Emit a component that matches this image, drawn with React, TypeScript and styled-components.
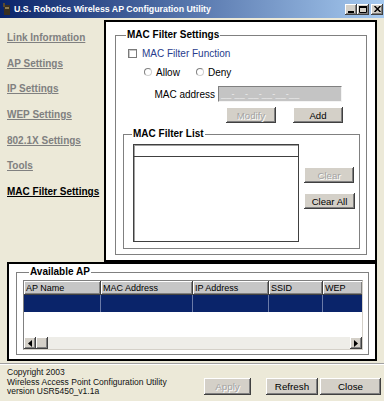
import React from 'react';
import styled, { createGlobalStyle } from 'styled-components';

const GlobalStyle = createGlobalStyle`
  html, body { margin: 0; padding: 0; }
  body { background: #ECE9D8; font-family: "Liberation Sans", Arial, sans-serif; }
  *, *::before, *::after { box-sizing: border-box; }
`;

const Window = styled.div`
  width: 384px;
  height: 401px;
  background: #ECE9D8;
  display: flex;
  flex-direction: column;
  overflow: hidden;
`;

const TitleBar = styled.div`
  height: 18px;
  flex: none;
  display: flex;
  align-items: center;
  background: linear-gradient(to right, #0A246A, #A6CAF0);
  padding: 0 1px 0 2px;
`;

const TitleText = styled.span`
  color: #fff;
  font-weight: bold;
  font-size: 8.8px;
  margin-left: 2px;
  flex: 1;
  white-space: nowrap;
`;

const CaptionButtons = styled.div`
  display: flex;
  align-items: center;
`;

const CaptionButton = styled.div<{ $gap?: number }>`
  width: 12px;
  height: 11px;
  margin-left: ${(p) => p.$gap ?? 0}px;
  background: #D4D0C8;
  box-shadow: inset -1px -1px #404040, inset 1px 1px #fff, inset -2px -2px #808080;
  display: flex;
  align-items: center;
  justify-content: center;
`;

const Upper = styled.div`
  display: flex;
  height: 244px;
  flex: none;
`;

const Nav = styled.nav`
  width: 104px;
  flex: none;
  display: flex;
  flex-direction: column;
  gap: 13.67px;
  padding: 14px 0 0 7px;
`;

const NavLink = styled.a<{ $active?: boolean }>`
  font-size: 10px;
  line-height: 12px;
  font-weight: bold;
  color: ${(p) => (p.$active ? '#000' : '#808080')};
  text-decoration: underline;
  white-space: nowrap;
  cursor: pointer;
`;

const MainPanel = styled.section`
  margin-top: 2px;
  width: 273px;
  height: 242px;
  flex: none;
  background: #fff;
  border: 2px solid #000;
  padding: 7px 8px 0 9px;
`;

const Group = styled.fieldset<{ $m?: string; $h: number }>`
  margin: ${(p) => p.$m ?? '0'};
  padding: 0;
  min-width: 0;
  height: ${(p) => p.$h}px;
  border: 1px solid #808080;
  display: block;
`;

const Legend = styled.legend<{ $inset: number }>`
  margin-left: ${(p) => p.$inset}px;
  padding: 0 1px;
  font-size: 10px;
  line-height: 12px;
  font-weight: bold;
  color: #000;
`;

const CheckRow = styled.label`
  display: flex;
  align-items: center;
  gap: 5px;
  height: 12px;
  margin: 6px 0 0 12px;
  font-size: 10px;
  color: #283C8C;
`;

const CheckBox = styled.span`
  width: 9px;
  height: 9px;
  background: #fff;
  border: 1px solid #7a7a7a;
  box-shadow: inset 1px 1px #c8c8c8;
`;

const RadioRow = styled.div`
  display: flex;
  align-items: center;
  height: 12px;
  margin: 7px 0 0 28px;
  gap: 16px;
`;

const RadioOption = styled.label`
  display: flex;
  align-items: center;
  gap: 4px;
  font-size: 10px;
  color: #000;
`;

const RadioDot = styled.span`
  width: 8px;
  height: 8px;
  border-radius: 50%;
  background: #fff;
  border: 1px solid #808080;
  border-right-color: #d0d0d0;
  border-bottom-color: #d0d0d0;
`;

const FieldRow = styled.div`
  display: flex;
  align-items: center;
  justify-content: flex-end;
  gap: 3px;
  height: 16px;
  margin-top: 8px;
  padding-right: 24px;
  font-size: 10px;
`;

const MacInput = styled.div`
  width: 124px;
  height: 16px;
  background: #C4C4C4;
  border: 1px solid #808080;
  border-right-color: #f4f4f4;
  border-bottom-color: #f4f4f4;
  font-size: 9px;
  line-height: 14px;
  padding-left: 2px;
  color: #ececec;
  letter-spacing: 0.2px;
`;

const ButtonRow = styled.div`
  display: flex;
  justify-content: flex-end;
  gap: 17px;
  margin-top: 5px;
  padding-right: 23px;
`;

const Button = styled.button<{ $w: number; $disabled?: boolean }>`
  width: ${(p) => p.$w}px;
  height: 16px;
  padding: 0;
  font-family: "Liberation Sans", Arial, sans-serif;
  font-size: 9.6px;
  background: #D4D0C8;
  border: none;
  box-shadow: inset -1px -1px #404040, inset 1px 1px #fff, inset -2px -2px #808080;
  color: ${(p) => (p.$disabled ? '#a3a3a3' : '#000')};
  text-shadow: ${(p) => (p.$disabled ? '1px 1px #fff' : 'none')};
`;

const ListArea = styled.div`
  display: flex;
  padding: 4px 0 0 9px;
`;

const ListBox = styled.div`
  width: 166px;
  height: 98px;
  background: #fff;
  border: 1px solid #404040;
  box-shadow: inset 1px 1px #a0a0a0;
`;

const ListHeader = styled.div`
  height: 12px;
  border-bottom: 1px solid #404040;
`;

const SideButtons = styled.div`
  display: flex;
  flex-direction: column;
  gap: 10px;
  margin-left: 5px;
  padding-top: 23px;
`;

const APPanel = styled.section`
  margin-left: 7px;
  width: 370px;
  height: 99px;
  flex: none;
  background: #fff;
  border: 2px solid #000;
  padding: 2px 6px 0 7px;
`;

const Table = styled.div`
  height: 70px;
  margin: 2px 5px 0 6px;
  border: 1px solid #808080;
  border-right-color: #d4d0c8;
  border-bottom-color: #d4d0c8;
  background: #fff;
  display: flex;
  flex-direction: column;
  overflow: hidden;
`;

const Row = styled.div`
  display: flex;
  flex: none;
`;

const HeadCell = styled.div<{ $w: number }>`
  width: ${(p) => p.$w}px;
  flex: none;
  height: 14px;
  background: #C6C6C6;
  box-shadow: inset -1px -1px #404040, inset 1px 1px #fff, inset -2px -2px #808080;
  font-size: 9px;
  line-height: 14px;
  padding-left: 2px;
  white-space: nowrap;
  overflow: hidden;
`;

const SelCell = styled.div<{ $w: number }>`
  width: ${(p) => p.$w}px;
  flex: none;
  height: 17px;
  background: #0A246A;
  border-right: 1px solid #6B7BA8;
`;

const Empty = styled.div`
  flex: 1;
`;

const ScrollBar = styled.div`
  height: 12px;
  flex: none;
  display: flex;
  background: #EEEDE8;
`;

const ScrollBtn = styled.div`
  width: 12px;
  height: 12px;
  flex: none;
  background: #D4D0C8;
  box-shadow: inset -1px -1px #404040, inset 1px 1px #fff, inset -2px -2px #808080;
  display: flex;
  align-items: center;
  justify-content: center;
`;

const Track = styled.div`
  flex: 1;
`;

const Separator = styled.div`
  margin-top: 2px;
  height: 2px;
  flex: none;
  border-top: 1px solid #A0A0A0;
  border-bottom: 1px solid #fff;
`;

const Footer = styled.footer`
  flex: 1;
  display: flex;
  align-items: flex-start;
  padding: 3px 3px 0 7px;
`;

const Info = styled.div`
  flex: 1;
  font-size: 8.5px;
  line-height: 9.7px;
  color: #111;
`;

const FooterButtons = styled.div`
  display: flex;
  margin-top: 10px;
`;

const FooterButton = styled(Button)<{ $gap: number }>`
  height: 17px;
  margin-left: ${(p) => p.$gap}px;
  font-size: 9.8px;
`;

const Arrow = ({ dir }: { dir: 'l' | 'r' }) => (
  <svg width="4" height="7" viewBox="0 0 4 7">
    {dir === 'l' ? <path d="M4 0 L0 3.5 L4 7 Z" fill="#000" /> : <path d="M0 0 L4 3.5 L0 7 Z" fill="#000" />}
  </svg>
);

const navItems = [
  'Link Information',
  'AP Settings',
  'IP Settings',
  'WEP Settings',
  '802.1X Settings',
  'Tools',
  'MAC Filter Settings',
];

const columns: [string, number][] = [
  ['AP Name', 77],
  ['MAC Address', 92],
  ['IP Address', 76],
  ['SSID', 54],
  ['WEP', 40],
];

export default function App() {
  return (
    <>
      <GlobalStyle />
      <Window>
        <TitleBar>
          <svg width="10" height="14" viewBox="0 0 10 14">
            <rect x="2" y="3" width="6" height="10" fill="#3a3020" />
            <rect x="1" y="1" width="2" height="4" fill="#5a4a30" />
            <rect x="3" y="5" width="4" height="2" fill="#8a7a50" />
          </svg>
          <TitleText>U.S. Robotics Wireless AP Configuration Utility</TitleText>
          <CaptionButtons>
            <CaptionButton>
              <svg width="6" height="7" viewBox="0 0 6 7"><rect x="0" y="5" width="6" height="2" fill="#000" /></svg>
            </CaptionButton>
            <CaptionButton>
              <svg width="8" height="7" viewBox="0 0 8 7"><path d="M0.5 0.5 H7.5 V6.5 H0.5 Z" fill="none" stroke="#000" /><rect x="0" y="0" width="8" height="2" fill="#000" /></svg>
            </CaptionButton>
            <CaptionButton $gap={2}>
              <svg width="7" height="6" viewBox="0 0 7 6"><path d="M0.5 0 L6.5 6 M6.5 0 L0.5 6" stroke="#000" strokeWidth="1.5" /></svg>
            </CaptionButton>
          </CaptionButtons>
        </TitleBar>

        <Upper>
          <Nav>
            {navItems.map((n, i) => (
              <NavLink key={n} $active={i === navItems.length - 1}>{n}</NavLink>
            ))}
          </Nav>
          <MainPanel>
            <Group $h={226}>
              <Legend $inset={10}>MAC Filter Settings</Legend>
              <CheckRow>
                <CheckBox />
                MAC Filter Function
              </CheckRow>
              <RadioRow>
                <RadioOption><RadioDot />Allow</RadioOption>
                <RadioOption><RadioDot />Deny</RadioOption>
              </RadioRow>
              <FieldRow>
                MAC address
                <MacInput>__-__-__-__-__-__</MacInput>
              </FieldRow>
              <ButtonRow>
                <Button $w={50} $disabled>Modify</Button>
                <Button $w={50}>Add</Button>
              </ButtonRow>
              <Group $m="5px 6px 0 7px" $h={121}>
                <Legend $inset={8}>MAC Filter List</Legend>
                <ListArea>
                  <ListBox>
                    <ListHeader />
                  </ListBox>
                  <SideButtons>
                    <Button $w={50} $disabled>Clear</Button>
                    <Button $w={51}>Clear All</Button>
                  </SideButtons>
                </ListArea>
              </Group>
            </Group>
          </MainPanel>
        </Upper>

        <APPanel>
          <Group $h={89}>
            <Legend $inset={12}>Available AP</Legend>
            <Table>
              <Row>
                {columns.map(([c, w]) => (
                  <HeadCell key={c} $w={w}>{c}</HeadCell>
                ))}
              </Row>
              <Row>
                {columns.map(([c, w]) => (
                  <SelCell key={c} $w={w} />
                ))}
              </Row>
              <Empty />
              <ScrollBar>
                <ScrollBtn><Arrow dir="l" /></ScrollBtn>
                <ScrollBtn />
                <Track />
                <ScrollBtn><Arrow dir="r" /></ScrollBtn>
              </ScrollBar>
            </Table>
          </Group>
        </APPanel>

        <Separator />

        <Footer>
          <Info>
            Copyright 2003<br />
            Wireless Access Point Configuration Utility<br />
            version USR5450_v1.1a
          </Info>
          <FooterButtons>
            <FooterButton $w={47} $gap={0} $disabled>Apply</FooterButton>
            <FooterButton $w={52} $gap={15}>Refresh</FooterButton>
            <FooterButton $w={61} $gap={2}>Close</FooterButton>
          </FooterButtons>
        </Footer>
      </Window>
    </>
  );
}
